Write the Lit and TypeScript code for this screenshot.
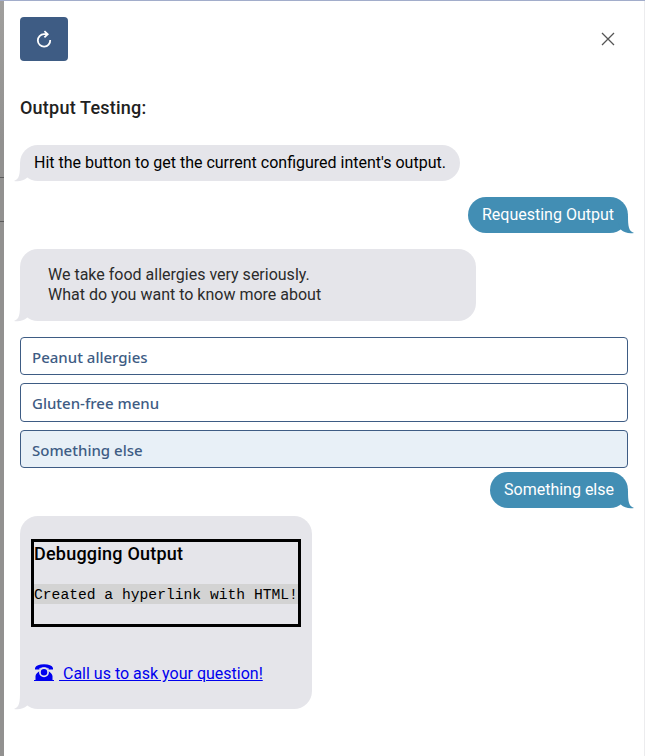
import { LitElement, html, css, svg } from "lit";
import { customElement, property } from "lit/decorators.js";

@customElement("chat-bubble")
class ChatBubble extends LitElement {
  @property({ reflect: true }) side: "bot" | "user" = "bot";

  static styles = css`
    :host {
      display: block;
      position: relative;
      box-sizing: border-box;
      width: fit-content;
      min-height: 36px;
      padding: 8px 14px;
      border-radius: 18px;
      background: #e5e5ea;
      color: #000;
      font: 16px/20px Roboto, sans-serif;
      white-space: nowrap;
    }
    :host([side="user"]) {
      align-self: flex-end;
      background: #428eb4;
      color: #fff;
    }
    .tail {
      position: absolute;
      left: -6px;
      bottom: -1px;
      width: 20px;
      height: 18px;
      fill: #e5e5ea;
    }
    :host([side="user"]) .tail {
      left: auto;
      right: -6px;
      fill: #428eb4;
      transform: scaleX(-1);
    }
  `;

  render() {
    return html`<slot></slot>
      <svg class="tail" viewBox="0 0 20 18">
        <path d="M6 0C6 10 5.500 15 0 17C5 18 10 16.500 13 13.800L16 6V0Z" />
      </svg>`;
  }
}

const refreshIcon = svg`<path d="M14.200 10A6.200 6.200 0 1 1 8 4.200H11.300M8.400 1.100L11.700 4.200L8.400 7.300" />`;

@customElement("app-root")
class AppRoot extends LitElement {
  static properties = { selected: { state: true } };
  declare selected: string;

  constructor() {
    super();
    this.selected = "Something else";
  }

  static styles = css`
    :host {
      display: block;
      box-sizing: border-box;
      height: 756px;
      overflow: hidden;
      font-family: Roboto, sans-serif;
    }
    .page {
      display: grid;
      grid-template-columns: 4px 1fr;
      height: 100%;
      box-sizing: border-box;
      border-top: 1px solid #a2adcb;
    }
    .backdrop {
      background: linear-gradient(#a09f9d, #929190 140px);
      display: grid;
      grid-template-rows: 44px 1fr;
      padding-top: 176px;
    }
    .row {
      border-top: 1px solid #5b5b5b;
    }
    .panel {
      display: flex;
      flex-direction: column;
      background: #fff;
      border-right: 1px solid #ececee;
      padding: 16px 16px 0;
    }
    .bar {
      display: flex;
      justify-content: space-between;
      height: 44px;
    }
    button {
      border: 0;
      padding: 0;
      margin: 0;
      background: none;
    }
    .refresh {
      display: grid;
      place-items: center;
      width: 48px;
      height: 44px;
      border-radius: 4px;
      background: #3e5c84;
    }
    .refresh svg {
      width: 16px;
      height: 18px;
      fill: none;
      stroke: #fff;
      stroke-width: 1.8;
    }
    .close {
      width: 14px;
      height: 14px;
      margin: 15px 13px 0 0;
    }
    .close svg {
      display: block;
      fill: none;
      stroke: #555;
      stroke-width: 1.3;
    }
    h1,
    h2 {
      margin: 0;
      font-weight: 500;
      font-size: 18px;
      line-height: 24px;
      letter-spacing: 0.22px;
    }
    h1 {
      margin: 35px 0 25px;
      color: #212121;
    }
    .request {
      margin-top: 16px;
    }
    .question {
      width: 456px;
      height: 72px;
      margin: 16px 0;
      padding: 16px 28px;
      color: #2b2b2b;
    }
    .options {
      display: flex;
      flex-direction: column;
      gap: 8.300px;
      margin-bottom: 4px;
    }
    .option {
      height: 38.200px;
      box-sizing: border-box;
      border: 1px solid #3e5c84;
      border-radius: 4px;
      padding: 1px 11px 0;
      text-align: left;
      color: #3e5c84;
      font: 500 15px/20px "Noto Sans", sans-serif;
    }
    .option.chosen {
      background: #e8f0f7;
    }
    .result {
      width: 292px;
      height: 193px;
      margin-top: 8px;
      padding: 23px 11px 0;
    }
    .debug {
      box-sizing: border-box;
      height: 88px;
      border: 3px solid #000;
    }
    .debug code {
      display: block;
      box-sizing: border-box;
      height: 20px;
      margin-top: 18px;
      padding-top: 1px;
      background: #d3d3d3;
      font: 14.660px/20px "Liberation Mono", monospace;
    }
    .call {
      display: flex;
      width: fit-content;
      margin: 37px 0 0 3px;
      color: #00e;
      text-decoration: none;
    }
    .phone {
      width: 20px;
      height: 17px;
      margin-right: 5px;
    }
    .label {
      white-space: pre;
      text-decoration: underline;
    }
  `;

  render() {
    const options = ["Peanut allergies", "Gluten-free menu", "Something else"];
    return html`<div class="page">
      <div class="backdrop"><div class="row"></div><div class="row"></div></div>
      <main class="panel">
        <div class="bar">
          <button class="refresh" aria-label="Refresh">
            <svg viewBox="0 0 16 18">${refreshIcon}</svg>
          </button>
          <button class="close" aria-label="Close">
            <svg width="14" height="14" viewBox="0 0 14 14"><path d="M1 1L13 13M13 1L1 13" /></svg>
          </button>
        </div>
        <h1>Output Testing:</h1>
        <chat-bubble>Hit the button to get the current configured intent's output.</chat-bubble>
        <chat-bubble class="request" side="user">Requesting Output</chat-bubble>
        <chat-bubble class="question">We take food allergies very seriously.<br />What do you want to know more about</chat-bubble>
        <div class="options">
          ${options.map(
            (o) => html`<button
              class="option ${o === this.selected ? "chosen" : ""}"
              @click=${() => (this.selected = o)}
            >${o}</button>`
          )}
        </div>
        <chat-bubble side="user">${this.selected}</chat-bubble>
        <chat-bubble class="result">
          <div class="debug">
            <h2>Debugging Output</h2>
            <code>Created a hyperlink with HTML!</code>
          </div>
          <a class="call" href="#"
            ><svg class="phone" viewBox="0 0 20 17">
              <path fill="#00e" d="M1 5.500V4C2 1.500 5 0.300 10 0.300S18 1.500 19 4V5.500H14.500V4C12 3.300 8 3.300 5.500 4V5.500Z" />
              <path fill="#00e" d="M1.500 16V12C1.800 9.500 3.500 8.500 6 7V4.800H14V7C16.500 8.500 18.200 9.500 18.500 12V16Z" />
              <circle cx="10" cy="8.200" r="4.100" fill="none" stroke="#e5e5ea" stroke-width="1.700" />
              <path fill="#00e" d="M0 16H20V17H0Z" />
            </svg><span class="label"> Call us to ask your question!</span></a
          >
        </chat-bubble>
      </main>
    </div>`;
  }
}
